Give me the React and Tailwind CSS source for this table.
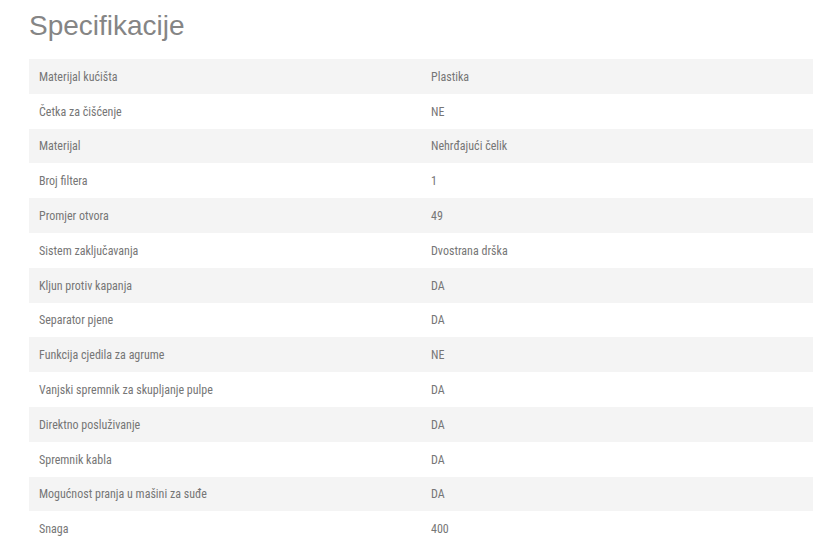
const rows = [
  ["Materijal kućišta", "Plastika"],
  ["Četka za čišćenje", "NE"],
  ["Materijal", "Nehrđajući čelik"],
  ["Broj filtera", "1"],
  ["Promjer otvora", "49"],
  ["Sistem zaključavanja", "Dvostrana drška"],
  ["Kljun protiv kapanja", "DA"],
  ["Separator pjene", "DA"],
  ["Funkcija cjedila za agrume", "NE"],
  ["Vanjski spremnik za skupljanje pulpe", "DA"],
  ["Direktno posluživanje", "DA"],
  ["Spremnik kabla", "DA"],
  ["Mogućnost pranja u mašini za suđe", "DA"],
  ["Snaga", "400"],
];

export default function App() {
  return (
    <div className="w-[834px] h-[558px] bg-white overflow-hidden">
      <div className="pl-[29px] pr-[21px]">
        <h2 className="pt-[8px] h-[59px] text-[28px] leading-[36px] text-[#858585] font-['Liberation_Sans',Arial,sans-serif]">
          Specifikacije
        </h2>
        <div className="w-[784px]">
          {rows.map(([k, v], i) => (
            <div
              key={i}
              className={`grid grid-cols-2 h-[34.8px] pt-[1px] items-center text-[12px] text-[#767676] font-['Liberation_Sans_Narrow','Roboto_Condensed',Roboto,sans-serif] ${
                i % 2 === 0 ? "bg-[#f4f4f4]" : "bg-white"
              }`}
            >
              <div className="pl-[10px]">{k}</div>
              <div className="pl-[10px]">{v}</div>
            </div>
          ))}
        </div>
      </div>
    </div>
  );
}
